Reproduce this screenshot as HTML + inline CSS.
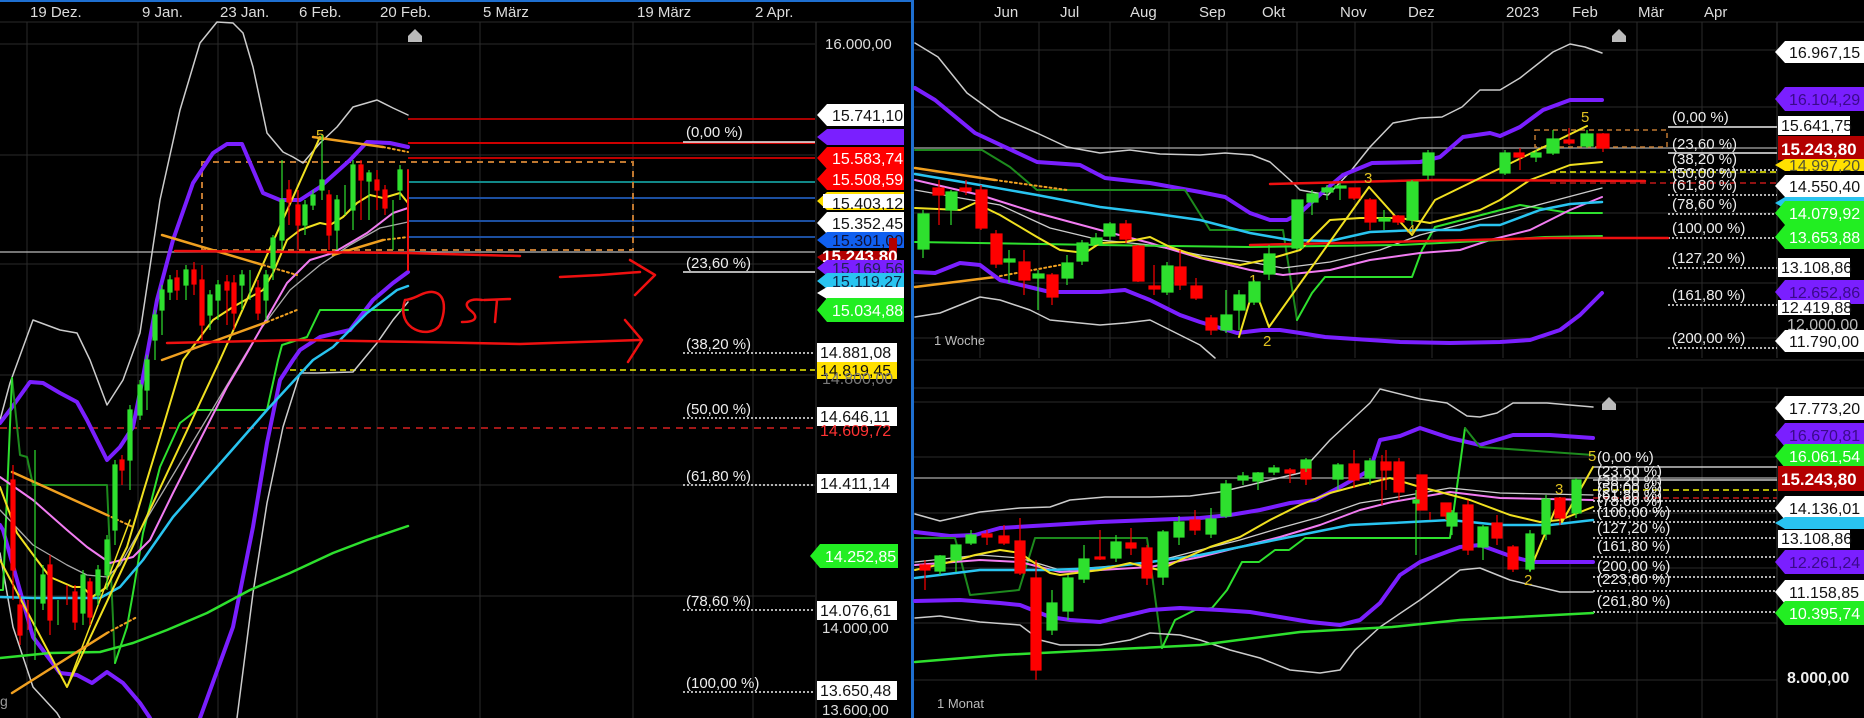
<!DOCTYPE html>
<html><head><meta charset="utf-8"><style>
html,body{margin:0;padding:0;background:#000;}
svg{display:block;}
text{font-family:"Liberation Sans",sans-serif;}
</style></head><body>
<svg width="1864" height="718" viewBox="0 0 1864 718" xmlns="http://www.w3.org/2000/svg">
<rect width="1864" height="718" fill="#000"/>
<!-- ============ LEFT PANEL ============ -->
<g stroke="#2a2a2a" stroke-width="1">
<line x1="27" y1="22" x2="27" y2="718"/><line x1="138" y1="22" x2="138" y2="718"/><line x1="218" y1="22" x2="218" y2="718"/><line x1="297" y1="22" x2="297" y2="718"/><line x1="377" y1="22" x2="377" y2="718"/><line x1="480" y1="22" x2="480" y2="718"/><line x1="633" y1="22" x2="633" y2="718"/><line x1="753" y1="22" x2="753" y2="718"/>
<line x1="0" y1="155" x2="815" y2="155"/><line x1="0" y1="264" x2="815" y2="264"/><line x1="0" y1="375" x2="815" y2="375"/><line x1="0" y1="485" x2="815" y2="485"/><line x1="0" y1="596" x2="815" y2="596"/><line x1="0" y1="44" x2="815" y2="44"/>
<line x1="0" y1="22" x2="912" y2="22"/>
</g>
<line x1="816" y1="22" x2="816" y2="718" stroke="#333"/>
<rect x="0" y="0" width="912" height="2" fill="#1e6fd0"/>
<rect x="911" y="0" width="3" height="718" fill="#1e6fd0"/>
<g fill="#ddd" font-size="15">
<text x="30" y="17">19 Dez.</text><text x="142" y="17">9 Jan.</text><text x="220" y="17">23 Jan.</text><text x="299" y="17">6 Feb.</text><text x="380" y="17">20 Feb.</text><text x="483" y="17">5 März</text><text x="637" y="17">19 März</text><text x="755" y="17">2 Apr.</text>
</g>
<path d="M408,36 l7,-7 l7,7 v6 h-14z" fill="#bbb"/>
<!-- horizontals -->
<line x1="0" y1="252" x2="815" y2="252" stroke="#bbb" stroke-width="1.3"/>
<line x1="408" y1="119" x2="815" y2="119" stroke="#a00" stroke-width="2"/>
<line x1="408" y1="143" x2="815" y2="143" stroke="#c00" stroke-width="2"/>
<line x1="408" y1="158" x2="815" y2="158" stroke="#b00" stroke-width="2"/>
<line x1="408" y1="182" x2="815" y2="182" stroke="#188" stroke-width="2"/>
<line x1="408" y1="198" x2="815" y2="198" stroke="#1c4fa0" stroke-width="2"/>
<line x1="408" y1="221" x2="815" y2="221" stroke="#1c4fa0" stroke-width="2"/>
<line x1="408" y1="237" x2="815" y2="237" stroke="#1c4fa0" stroke-width="2"/>
<rect x="202" y="162" width="431" height="88" fill="none" stroke="#c07830" stroke-width="2" stroke-dasharray="6,5"/>
<line x1="683" y1="142" x2="815" y2="142" stroke="#eee" stroke-width="1.5"/>
<line x1="683" y1="272" x2="815" y2="272" stroke="#eee" stroke-width="1.5"/>
<g stroke="#eee" stroke-width="1.5" stroke-dasharray="2,2">
<line x1="683" y1="353" x2="815" y2="353"/><line x1="683" y1="418" x2="815" y2="418"/><line x1="683" y1="485" x2="815" y2="485"/><line x1="683" y1="610" x2="815" y2="610"/><line x1="683" y1="692" x2="815" y2="692"/>
</g>
<line x1="290" y1="370" x2="815" y2="370" stroke="#ee0" stroke-width="1.5" stroke-dasharray="6,4"/>
<line x1="0" y1="428" x2="815" y2="428" stroke="#a01818" stroke-width="2" stroke-dasharray="7,6"/>
<g fill="#eee" font-size="15">
<text x="686" y="137">(0,00 %)</text><text x="686" y="268">(23,60 %)</text><text x="686" y="349">(38,20 %)</text><text x="686" y="414">(50,00 %)</text><text x="686" y="481">(61,80 %)</text><text x="686" y="606">(78,60 %)</text><text x="686" y="688">(100,00 %)</text>
</g>
<!-- curves left -->
<g fill="none" stroke-linejoin="round" stroke-linecap="round">
<polyline stroke="#ccc" stroke-width="1.5" points="0,420 10,383 33,320 60,330 77,333 90,360 107,405 123,380 140,333 160,200 180,110 200,43 217,22 233,23 243,33 253,67 267,133 283,152 293,157 303,163 320,143 337,127 353,107 377,100 393,108 408,115"/>
<polyline stroke="#ccc" stroke-width="1.5" points="0,553 13,627 33,687 57,713 60,718"/>
<polyline stroke="#ccc" stroke-width="1.5" points="237,718 253,593 267,503 283,427 300,373 317,373 353,372 377,343 393,320 408,302"/>
<polyline stroke="#7a1fff" stroke-width="4" points="0,423 10,410 30,382 43,383 60,393 77,402 87,420 107,460 120,447 133,427 143,377 157,300 173,240 193,183 213,153 227,144 242,144 263,193 280,200 300,200 320,187 350,160 367,142 390,143 408,147"/>
<polyline stroke="#7a1fff" stroke-width="4" points="0,525 3,530 33,637 60,673 77,675 92,683 107,672 123,683 140,703 150,718"/>
<polyline stroke="#7a1fff" stroke-width="4" points="200,718 233,627 253,527 267,443 280,380 293,360 300,350 320,337 350,330 373,300 393,283 408,272"/>
<polyline stroke="#1d8a1d" stroke-width="2" points="12,378 20,455 27,457 33,485 107,485 110,553 115,663"/>
<polyline stroke="#2ee02e" stroke-width="2" points="0,590 3,590 12,378"/>
<polyline stroke="#2ee02e" stroke-width="2" points="115,663 127,627 133,593 143,533 160,467 180,423 197,410 267,410 278,360 282,345 307,337 320,310 408,310"/>
<polyline stroke="#aaa" stroke-width="1.3" points="0,510 33,545 67,565 87,575 107,577 120,565 140,530 170,480 200,430 230,380 260,330 290,290 320,265 350,245 380,228 408,222"/>
<polyline stroke="#f27cf2" stroke-width="2" points="0,477 33,500 67,530 87,547 110,563 133,557 150,540 173,493 200,440 227,387 243,360 287,283 310,260 333,253 367,233 393,213 408,208"/>
<polyline stroke="#29c4f0" stroke-width="2.5" points="0,597 33,598 100,598 120,587 143,560 173,517 217,467 267,410 313,360 333,347 367,313 397,290 408,286"/>
<polyline stroke="#2ee02e" stroke-width="2.5" points="0,658 50,653 100,652 133,643 167,630 207,613 250,590 290,573 333,553 367,540 408,526"/>
<polyline stroke="#f0e020" stroke-width="2" points="0,487 17,533 37,560 50,577 73,587 83,587 92,597 107,587 127,547 143,493 160,437 183,360 213,320 233,307 263,290 273,273 287,240 300,230 320,223 330,225 343,217 357,203 370,195 383,198 400,193 408,203"/>
<polyline stroke="#f0e020" stroke-width="2" points="0,560 67,687 220,360 320,137"/>
<polyline stroke="#f0e020" stroke-width="1.5" points="67,687 100,600 130,520"/>
<line x1="162" y1="235" x2="263" y2="265" stroke="#f0a020" stroke-width="2.5"/>
<line x1="263" y1="265" x2="297" y2="275" stroke="#f0a020" stroke-width="2" stroke-dasharray="2,3"/>
<line x1="162" y1="360" x2="267" y2="322" stroke="#f0a020" stroke-width="2.5"/>
<line x1="267" y1="322" x2="297" y2="310" stroke="#f0a020" stroke-width="2" stroke-dasharray="2,3"/>
<line x1="313" y1="137" x2="383" y2="147" stroke="#f0a020" stroke-width="2.5"/>
<line x1="383" y1="147" x2="408" y2="152" stroke="#f0a020" stroke-width="2" stroke-dasharray="2,3"/>
<line x1="333" y1="255" x2="383" y2="240" stroke="#f0a020" stroke-width="2.5"/>
<line x1="383" y1="240" x2="408" y2="237" stroke="#f0a020" stroke-width="2" stroke-dasharray="2,3"/>
<line x1="12" y1="472" x2="107" y2="515" stroke="#f0a020" stroke-width="2.5"/>
<line x1="107" y1="515" x2="133" y2="527" stroke="#f0a020" stroke-width="2" stroke-dasharray="2,3"/>
<line x1="12" y1="693" x2="107" y2="633" stroke="#f0a020" stroke-width="2.5"/>
<line x1="107" y1="633" x2="137" y2="617" stroke="#f0a020" stroke-width="2" stroke-dasharray="2,3"/>
<!-- hand drawn red -->
<polyline stroke="#ee1010" stroke-width="2.5" points="175,251 300,252 408,253 520,256"/>
<polyline stroke="#ee1010" stroke-width="2.5" points="167,343 300,340 420,342 520,344 640,340"/>
<polyline stroke="#ee1010" stroke-width="2.5" points="560,277 600,275 640,272"/>
<polyline stroke="#ee1010" stroke-width="2.5" points="630,260 655,275 635,295"/>
<polyline stroke="#ee1010" stroke-width="2.5" points="625,320 642,340 628,362"/>
<path d="M405,300 C395,330 430,340 440,325 C450,300 440,285 420,295 C410,300 405,300 405,300" stroke="#ee1010" stroke-width="2.5"/>
<path d="M482,300 C470,298 462,303 470,310 C478,316 478,322 462,322 M484,300 L510,299 M497,300 L495,322" stroke="#ee1010" stroke-width="2.5"/>
<line x1="408" y1="170" x2="408" y2="270" stroke="#ee1010" stroke-width="2"/>
</g>
<text x="316" y="140" fill="#e0c020" font-size="15">5</text>
<!-- left candles -->
<g stroke-width="1.2">
<g stroke="#f00" fill="#f00"><line x1="13" y1="465" x2="13" y2="600"/><rect x="11" y="480" width="4" height="90"/><line x1="20" y1="595" x2="20" y2="645"/><rect x="18" y="605" width="4" height="30"/><line x1="28" y1="600" x2="28" y2="630"/><line x1="50" y1="555" x2="50" y2="635"/><rect x="48" y="565" width="4" height="55"/><line x1="67" y1="585" x2="67" y2="605"/><line x1="75" y1="585" x2="75" y2="630"/><rect x="73" y="592" width="4" height="30"/><line x1="90" y1="578" x2="90" y2="625"/><rect x="88" y="582" width="4" height="35"/><line x1="122" y1="455" x2="122" y2="485"/><rect x="120" y="460" width="4" height="10"/><line x1="177" y1="270" x2="177" y2="300"/><rect x="175" y="278" width="4" height="12"/><line x1="194" y1="262" x2="194" y2="295"/><rect x="192" y="270" width="4" height="14"/><line x1="202" y1="265" x2="202" y2="340"/><rect x="200" y="280" width="4" height="45"/><line x1="227" y1="275" x2="227" y2="325"/><rect x="225" y="282" width="4" height="8"/><line x1="234" y1="275" x2="234" y2="330"/><rect x="232" y="283" width="4" height="30"/><line x1="258" y1="280" x2="258" y2="320"/><rect x="256" y="288" width="4" height="25"/><line x1="289" y1="180" x2="289" y2="225"/><rect x="287" y="190" width="4" height="12"/><line x1="298" y1="190" x2="298" y2="250"/><rect x="296" y="205" width="4" height="20"/><line x1="329" y1="190" x2="329" y2="250"/><rect x="327" y="195" width="4" height="40"/><line x1="361" y1="160" x2="361" y2="220"/><rect x="359" y="165" width="4" height="15"/><line x1="377" y1="170" x2="377" y2="210"/><rect x="375" y="180" width="4" height="10"/><line x1="385" y1="185" x2="385" y2="215"/><rect x="383" y="190" width="4" height="18"/></g>
<g stroke="#2ee02e" fill="#2ee02e"><line x1="35" y1="450" x2="35" y2="660"/><line x1="43" y1="565" x2="43" y2="610"/><rect x="41" y="575" width="4" height="28"/><line x1="58" y1="600" x2="58" y2="625"/><line x1="83" y1="570" x2="83" y2="625"/><rect x="81" y="575" width="4" height="38"/><line x1="98" y1="565" x2="98" y2="605"/><rect x="96" y="570" width="4" height="25"/><line x1="107" y1="535" x2="107" y2="590"/><rect x="105" y="540" width="4" height="35"/><line x1="115" y1="460" x2="115" y2="545"/><rect x="113" y="465" width="4" height="65"/><line x1="130" y1="405" x2="130" y2="490"/><rect x="128" y="410" width="4" height="50"/><line x1="140" y1="380" x2="140" y2="420"/><rect x="138" y="385" width="4" height="30"/><line x1="147" y1="355" x2="147" y2="410"/><rect x="145" y="360" width="4" height="30"/><line x1="155" y1="310" x2="155" y2="360"/><rect x="153" y="315" width="4" height="25"/><line x1="162" y1="285" x2="162" y2="335"/><rect x="160" y="290" width="4" height="20"/><line x1="170" y1="275" x2="170" y2="300"/><rect x="168" y="280" width="4" height="12"/><line x1="186" y1="265" x2="186" y2="300"/><rect x="184" y="270" width="4" height="15"/><line x1="210" y1="290" x2="210" y2="330"/><rect x="208" y="295" width="4" height="20"/><line x1="218" y1="280" x2="218" y2="320"/><rect x="216" y="285" width="4" height="15"/><line x1="242" y1="270" x2="242" y2="310"/><rect x="240" y="275" width="4" height="10"/><line x1="250" y1="270" x2="250" y2="300"/><line x1="266" y1="270" x2="266" y2="320"/><rect x="264" y="275" width="4" height="25"/><line x1="273" y1="235" x2="273" y2="280"/><rect x="271" y="238" width="4" height="30"/><line x1="282" y1="160" x2="282" y2="250"/><rect x="280" y="200" width="4" height="40"/><line x1="305" y1="200" x2="305" y2="235"/><rect x="303" y="205" width="4" height="20"/><line x1="313" y1="190" x2="313" y2="210"/><rect x="311" y="195" width="4" height="10"/><line x1="322" y1="135" x2="322" y2="200"/><rect x="320" y="180" width="4" height="10"/><line x1="337" y1="195" x2="337" y2="250"/><rect x="335" y="200" width="4" height="30"/><line x1="345" y1="185" x2="345" y2="215"/><line x1="353" y1="160" x2="353" y2="230"/><rect x="351" y="165" width="4" height="45"/><line x1="369" y1="170" x2="369" y2="220"/><rect x="367" y="173" width="4" height="8"/><line x1="393" y1="200" x2="393" y2="250"/><line x1="400" y1="165" x2="400" y2="200"/><rect x="398" y="170" width="4" height="20"/></g>
</g>
<text x="0" y="706" fill="#999" font-size="14">g</text>
<!-- left axis -->
<g font-size="15" fill="#ddd"><text x="825" y="49">16.000,00</text><text x="822" y="633">14.000,00</text><text x="822" y="715">13.600,00</text></g>
<g font-size="16">
<path d="M817,115 l10,-11 h77 v22 h-77z" fill="#fff"/><text x="832" y="121" fill="#111">15.741,10</text>
<path d="M817,137 l10,-8 h77 v16 h-77z" fill="#7a1fff"/>
<path d="M817,158 l10,-11 h77 v22 h-77z" fill="#f00"/><text x="832" y="164" fill="#fff">15.583,74</text>
<path d="M817,179 l10,-11 h77 v22 h-77z" fill="#f00"/><text x="832" y="185" fill="#fff">15.508,59</text>
<path d="M817,201 l10,-9 h77 v18 h-77z" fill="#ffe000"/><rect x="823" y="194" width="81" height="14" fill="#fff"/><text x="832" y="209" fill="#111">15.403,12</text>
<path d="M817,223 l10,-11 h77 v22 h-77z" fill="#fff"/><text x="832" y="229" fill="#111">15.352,45</text>
<path d="M817,240 l10,-8 h77 v16 h-77z" fill="#1060f0"/><text x="832" y="246" fill="#113">15.301,00</text>
<path d="M817,257 l10,-6 h62 v-13 h8 v30 h-8 v-3 h-62z" fill="#b30000"/><text x="822" y="262" fill="#fff" font-weight="bold" font-size="17">15.243,80</text>
<path d="M817,268 l10,-8 h77 v16 h-77z" fill="#7a1fff"/><text x="832" y="274" fill="#225">15.169,56</text>
<path d="M817,281 l10,-8 h77 v16 h-77z" fill="#29c4f0"/><text x="832" y="287" fill="#124">15.119,27</text>
<path d="M817,293 l10,-6 h77 v12 h-77z" fill="#fff"/>
<path d="M817,310 l10,-12 h77 v24 h-77z" fill="#22ee22"/><text x="832" y="316" fill="#fff">15.034,88</text>
<rect x="817" y="343" width="80" height="19" fill="#fff"/><text x="820" y="358" fill="#111">14.881,08</text>
<rect x="817" y="362" width="80" height="17" fill="#ffe000"/><text x="820" y="376" fill="#111">14.819,45</text>
<text x="822" y="384" fill="#777">14.800,00</text>
<rect x="817" y="407" width="80" height="19" fill="#fff"/><text x="820" y="422" fill="#111">14.646,11</text>
<text x="820" y="436" fill="#f33">14.609,72</text>
<rect x="817" y="474" width="80" height="19" fill="#fff"/><text x="820" y="489" fill="#111">14.411,14</text>
<path d="M810,556 l10,-12 h78 v24 h-78z" fill="#22ee22"/><text x="825" y="562" fill="#fff">14.252,85</text>
<rect x="817" y="601" width="80" height="19" fill="#fff"/><text x="820" y="616" fill="#111">14.076,61</text>
<rect x="817" y="681" width="80" height="19" fill="#fff"/><text x="820" y="696" fill="#111">13.650,48</text>
</g>

<!-- ============ RIGHT TOP PANEL ============ -->
<g stroke="#2a2a2a" stroke-width="1">
<line x1="980" y1="22" x2="980" y2="358"/><line x1="1039" y1="22" x2="1039" y2="358"/><line x1="1110" y1="22" x2="1110" y2="358"/><line x1="1169" y1="22" x2="1169" y2="358"/><line x1="1227" y1="22" x2="1227" y2="358"/><line x1="1297" y1="22" x2="1297" y2="358"/><line x1="1355" y1="22" x2="1355" y2="358"/><line x1="1432" y1="22" x2="1432" y2="358"/><line x1="1503" y1="22" x2="1503" y2="358"/><line x1="1570" y1="22" x2="1570" y2="358"/><line x1="1637" y1="22" x2="1637" y2="358"/><line x1="1702" y1="22" x2="1702" y2="358"/>
<line x1="914" y1="22" x2="1864" y2="22"/>
<line x1="914" y1="50" x2="1777" y2="50"/><line x1="914" y1="107" x2="1777" y2="107"/><line x1="914" y1="173" x2="1777" y2="173"/><line x1="914" y1="213" x2="1777" y2="213"/><line x1="914" y1="283" x2="1777" y2="283"/><line x1="914" y1="338" x2="1777" y2="338"/>
</g>
<line x1="1777" y1="22" x2="1777" y2="358" stroke="#333"/>
<g fill="#ddd" font-size="15">
<text x="994" y="17">Jun</text><text x="1060" y="17">Jul</text><text x="1130" y="17">Aug</text><text x="1199" y="17">Sep</text><text x="1262" y="17">Okt</text><text x="1340" y="17">Nov</text><text x="1408" y="17">Dez</text><text x="1506" y="17">2023</text><text x="1572" y="17">Feb</text><text x="1638" y="17">Mär</text><text x="1704" y="17">Apr</text>
</g>
<path d="M1612,36 l7,-7 l7,7 v6 h-14z" fill="#bbb"/>
<line x1="914" y1="148" x2="1777" y2="148" stroke="#aaa" stroke-width="1.3"/>
<line x1="1668" y1="127" x2="1777" y2="127" stroke="#eee" stroke-width="1.5"/>
<line x1="1668" y1="153" x2="1777" y2="153" stroke="#eee" stroke-width="1.5"/>
<g stroke="#eee" stroke-width="1.5" stroke-dasharray="2,2">
<line x1="1668" y1="170" x2="1777" y2="170"/><line x1="1668" y1="195" x2="1777" y2="195"/><line x1="1668" y1="214" x2="1777" y2="214"/><line x1="1668" y1="238" x2="1777" y2="238"/><line x1="1668" y1="268" x2="1777" y2="268"/><line x1="1668" y1="305" x2="1777" y2="305"/><line x1="1668" y1="348" x2="1777" y2="348"/>
</g>
<line x1="1550" y1="172" x2="1777" y2="172" stroke="#ee0" stroke-width="1.5" stroke-dasharray="6,4"/>
<line x1="1550" y1="183" x2="1777" y2="183" stroke="#c01818" stroke-width="1.5" stroke-dasharray="6,4"/>
<rect x="1535" y="130" width="132" height="17" fill="none" stroke="#c07830" stroke-width="1.5" stroke-dasharray="5,4"/>
<g fill="none" stroke-linejoin="round" stroke-linecap="round">
<polyline stroke="#ccc" stroke-width="1.5" points="915,43 938,57 967,93 1000,117 1037,133 1067,147 1100,153 1130,150 1160,154 1200,155 1225,153 1252,155 1270,162 1290,180 1300,190 1328,195 1350,172 1370,147 1393,123 1420,118 1442,117 1462,107 1480,90 1500,90 1520,78 1553,52 1570,44 1585,47 1602,53"/>
<polyline stroke="#7a1fff" stroke-width="4" points="915,88 935,100 975,133 1037,162 1080,165 1105,178 1150,183 1200,192 1225,197 1250,213 1270,220 1287,220 1300,213 1325,190 1343,175 1372,163 1420,162 1440,157 1463,137 1490,133 1500,136 1520,127 1543,110 1570,100 1602,100"/>
<polyline stroke="#1d8a1d" stroke-width="2" points="915,150 982,150 1010,167 1037,190 1185,190 1210,230 1283,230 1297,320"/>
<polyline stroke="#2ee02e" stroke-width="2" points="1297,320 1312,293 1325,277 1412,277 1422,250 1435,227 1520,205 1570,213 1602,213"/>
<polyline stroke="#ccc" stroke-width="1.3" points="915,190 1000,205 1050,228 1100,240 1150,245 1200,255 1250,262 1283,268 1330,262 1380,250 1420,235 1490,217 1530,207 1602,188"/>
<polyline stroke="#f27cf2" stroke-width="2" points="915,180 980,195 1037,213 1100,230 1150,243 1200,258 1250,270 1283,275 1330,270 1370,260 1420,253 1460,250 1490,240 1530,230 1570,210 1602,197"/>
<polyline stroke="#29c4f0" stroke-width="2.5" points="915,174 980,185 1037,195 1100,207 1150,213 1200,220 1250,233 1290,240 1330,241 1370,232 1420,230 1460,230 1480,225 1500,225 1540,210 1570,204 1602,202"/>
<polyline stroke="#2ee02e" stroke-width="2" points="915,242 1100,245 1250,247 1400,245 1500,240 1545,237 1602,236"/>
<polyline stroke="#f0e020" stroke-width="2" points="915,208 960,210 975,203 1000,215 1037,237 1060,250 1085,253 1100,243 1125,242 1150,237 1170,247 1203,258 1240,265 1265,260 1283,255 1300,250 1330,220 1360,218 1400,218 1430,223 1480,210 1500,200 1530,180 1570,165 1602,162"/>
<polyline stroke="#ee1010" stroke-width="2.5" points="1270,184 1435,180 1645,181"/>
<polyline stroke="#ee1010" stroke-width="2.5" points="1250,245 1430,241 1550,238 1668,238"/>
<line x1="915" y1="168" x2="995" y2="180" stroke="#f0a020" stroke-width="2.5"/>
<line x1="995" y1="180" x2="1067" y2="190" stroke="#f0a020" stroke-width="2" stroke-dasharray="2,3"/>
<line x1="915" y1="287" x2="995" y2="277" stroke="#f0a020" stroke-width="2.5"/>
<line x1="995" y1="277" x2="1060" y2="265" stroke="#f0a020" stroke-width="2" stroke-dasharray="2,3"/>
<polyline stroke="#7a1fff" stroke-width="4" points="915,272 935,273 960,263 980,265 1000,280 1050,292 1100,292 1125,290 1150,300 1180,315 1200,322 1237,333 1262,330 1280,330 1300,333 1325,337 1400,342 1450,343 1500,342 1530,340 1560,330 1580,315 1602,293"/>
<polyline stroke="#ccc" stroke-width="1.5" points="915,317 940,313 980,297 1000,300 1030,310 1050,320 1100,325 1125,323 1150,320 1180,335 1200,345 1215,358"/>
<polyline stroke="#f0e020" stroke-width="2" points="1239,337 1254,287 1269,327 1369,187 1412,235 1435,200 1587,126"/>
</g>
<g fill="#e0c020" font-size="15"><text x="1249" y="285">1</text><text x="1263" y="346">2</text><text x="1364" y="183">3</text><text x="1407" y="235">4</text><text x="1581" y="122">5</text></g>
<!-- top right candles -->
<g stroke-width="1.2">
<g stroke="#f00" fill="#f00"><line x1="939" y1="180" x2="939" y2="225"/><rect x="933" y="188" width="11" height="7"/><line x1="966" y1="180" x2="966" y2="195"/><rect x="960" y="188" width="11" height="3"/><line x1="981" y1="185" x2="981" y2="230"/><rect x="976" y="190" width="11" height="38"/><line x1="996" y1="230" x2="996" y2="268"/><rect x="991" y="234" width="11" height="30"/><line x1="1024" y1="250" x2="1024" y2="295"/><rect x="1019" y="262" width="11" height="18"/><line x1="1052" y1="273" x2="1052" y2="305"/><rect x="1047" y="275" width="11" height="22"/><line x1="1126" y1="220" x2="1126" y2="243"/><rect x="1120" y="224" width="11" height="15"/><line x1="1138" y1="245" x2="1138" y2="282"/><rect x="1133" y="246" width="11" height="35"/><line x1="1154" y1="265" x2="1154" y2="295"/><rect x="1149" y="286" width="11" height="3"/><line x1="1180" y1="250" x2="1180" y2="290"/><rect x="1175" y="267" width="11" height="18"/><line x1="1196" y1="278" x2="1196" y2="300"/><rect x="1191" y="286" width="11" height="12"/><line x1="1211" y1="315" x2="1211" y2="335"/><rect x="1206" y="318" width="11" height="12"/><line x1="1354" y1="188" x2="1354" y2="200"/><rect x="1349" y="188" width="11" height="10"/><line x1="1370" y1="198" x2="1370" y2="230"/><rect x="1365" y="200" width="11" height="22"/><line x1="1398" y1="215" x2="1398" y2="225"/><rect x="1393" y="216" width="11" height="6"/><line x1="1520" y1="148" x2="1520" y2="170"/><rect x="1514" y="153" width="10" height="4"/><line x1="1569" y1="128" x2="1569" y2="145"/><rect x="1564" y="140" width="10" height="3"/><line x1="1603" y1="133" x2="1603" y2="152"/><rect x="1597" y="134" width="12" height="14"/></g>
<g stroke="#2ee02e" fill="#2ee02e"><line x1="923" y1="210" x2="923" y2="258"/><rect x="918" y="214" width="11" height="35"/><line x1="951" y1="190" x2="951" y2="225"/><rect x="946" y="192" width="11" height="18"/><line x1="1009" y1="250" x2="1009" y2="283"/><rect x="1004" y="259" width="11" height="3"/><line x1="1038" y1="270" x2="1038" y2="310"/><rect x="1033" y="274" width="11" height="4"/><line x1="1067" y1="255" x2="1067" y2="285"/><rect x="1062" y="263" width="11" height="15"/><line x1="1082" y1="240" x2="1082" y2="265"/><rect x="1077" y="243" width="11" height="18"/><line x1="1096" y1="233" x2="1096" y2="245"/><rect x="1091" y="238" width="11" height="6"/><line x1="1110" y1="222" x2="1110" y2="240"/><rect x="1104" y="224" width="11" height="12"/><line x1="1167" y1="262" x2="1167" y2="295"/><rect x="1162" y="266" width="11" height="26"/><line x1="1226" y1="290" x2="1226" y2="333"/><rect x="1221" y="315" width="11" height="15"/><line x1="1239" y1="290" x2="1239" y2="330"/><rect x="1234" y="295" width="11" height="15"/><line x1="1254" y1="280" x2="1254" y2="305"/><rect x="1249" y="282" width="11" height="20"/><line x1="1269" y1="245" x2="1269" y2="280"/><rect x="1264" y="254" width="11" height="20"/><line x1="1297" y1="200" x2="1297" y2="250"/><rect x="1292" y="200" width="11" height="48"/><line x1="1312" y1="190" x2="1312" y2="215"/><rect x="1307" y="194" width="11" height="8"/><line x1="1327" y1="185" x2="1327" y2="200"/><rect x="1322" y="188" width="11" height="4"/><line x1="1340" y1="183" x2="1340" y2="200"/><rect x="1335" y="186" width="11" height="2"/><line x1="1384" y1="210" x2="1384" y2="230"/><rect x="1379" y="218" width="11" height="3"/><line x1="1412" y1="180" x2="1412" y2="225"/><rect x="1407" y="182" width="11" height="38"/><line x1="1428" y1="150" x2="1428" y2="180"/><rect x="1423" y="153" width="11" height="22"/><line x1="1505" y1="150" x2="1505" y2="175"/><rect x="1500" y="153" width="10" height="20"/><line x1="1536" y1="150" x2="1536" y2="162"/><rect x="1531" y="153" width="10" height="4"/><line x1="1553" y1="130" x2="1553" y2="155"/><rect x="1547" y="139" width="12" height="14"/><line x1="1587" y1="130" x2="1587" y2="148"/><rect x="1581" y="134" width="12" height="12"/></g>
</g>
<text x="934" y="345" fill="#bbb" font-size="13">1 Woche</text>
<g fill="#eee" font-size="15">
<text x="1672" y="122">(0,00 %)</text><text x="1672" y="149">(23,60 %)</text><text x="1672" y="164">(38,20 %)</text><text x="1672" y="178">(50,00 %)</text><text x="1672" y="190">(61,80 %)</text><text x="1672" y="209">(78,60 %)</text><text x="1672" y="233">(100,00 %)</text><text x="1672" y="263">(127,20 %)</text><text x="1672" y="300">(161,80 %)</text><text x="1672" y="343">(200,00 %)</text>
</g>
<g font-size="16">
<path d="M1775,52 l10,-11 h79 v22 h-79z" fill="#fff"/><text x="1789" y="58" fill="#111">16.967,15</text>
<path d="M1775,99 l10,-12 h79 v24 h-79z" fill="#7a1fff"/><text x="1789" y="105" fill="#3a0a8a">16.104,29</text>
<rect x="1778" y="116" width="72" height="19" fill="#fff"/><text x="1781" y="131" fill="#111">15.641,75</text>
<rect x="1778" y="136" width="86" height="24" fill="#b30000"/><text x="1781" y="155" fill="#fff" font-weight="bold" font-size="17">15.243,80</text>
<path d="M1775,165 l10,-6 h79 v12 h-79z" fill="#ffe000"/><text x="1789" y="171" fill="#553">14.997,20</text>
<path d="M1775,186 l10,-11 h79 v22 h-79z" fill="#fff"/><text x="1789" y="192" fill="#111">14.550,40</text>
<path d="M1775,203 l10,-6 h79 v12 h-79z" fill="#29c4f0"/>
<path d="M1775,213 l10,-12 h79 v24 h-79z" fill="#22ee22"/><text x="1789" y="219" fill="#fff">14.079,92</text>
<path d="M1775,237 l10,-12 h79 v24 h-79z" fill="#22ee22"/><text x="1789" y="243" fill="#fff">13.653,88</text>
<rect x="1778" y="258" width="72" height="19" fill="#fff"/><text x="1781" y="273" fill="#111">13.108,86</text>
<path d="M1775,292 l10,-12 h79 v24 h-79z" fill="#7a1fff"/><text x="1789" y="298" fill="#3a0a8a">12.652,86</text>
<rect x="1778" y="300" width="72" height="15" fill="#fff"/><text x="1781" y="313" fill="#111">12.419,88</text>
<text x="1787" y="330" fill="#bbb">12.000,00</text>
<path d="M1775,341 l10,-11 h79 v22 h-79z" fill="#fff"/><text x="1789" y="347" fill="#111">11.790,00</text>
</g>

<!-- ============ RIGHT BOTTOM PANEL ============ -->
<g stroke="#2a2a2a" stroke-width="1">
<line x1="914" y1="360" x2="1864" y2="360"/><line x1="914" y1="388" x2="1864" y2="388"/>
<line x1="914" y1="402" x2="1777" y2="402"/><line x1="914" y1="457" x2="1777" y2="457"/><line x1="914" y1="513" x2="1777" y2="513"/><line x1="914" y1="568" x2="1777" y2="568"/><line x1="914" y1="623" x2="1777" y2="623"/><line x1="914" y1="680" x2="1777" y2="680"/>
<line x1="1420" y1="388" x2="1420" y2="718"/><line x1="1503" y1="388" x2="1503" y2="718"/><line x1="1570" y1="388" x2="1570" y2="718"/><line x1="1637" y1="388" x2="1637" y2="718"/><line x1="1702" y1="388" x2="1702" y2="718"/>
</g>
<line x1="1777" y1="388" x2="1777" y2="718" stroke="#333"/>
<path d="M1602,404 l7,-7 l7,7 v6 h-14z" fill="#bbb"/>
<line x1="914" y1="478" x2="1777" y2="478" stroke="#aaa" stroke-width="1.3"/>
<line x1="1593" y1="467" x2="1777" y2="467" stroke="#eee" stroke-width="1.3"/>
<line x1="1593" y1="480" x2="1777" y2="480" stroke="#eee" stroke-width="1.3"/>
<line x1="1593" y1="490" x2="1777" y2="490" stroke="#ee0" stroke-width="1.5" stroke-dasharray="6,4"/>
<line x1="1593" y1="498" x2="1777" y2="498" stroke="#c01818" stroke-width="1.5" stroke-dasharray="6,4"/>
<g stroke="#eee" stroke-width="1.5" stroke-dasharray="2,2">
<line x1="1593" y1="501" x2="1777" y2="501"/><line x1="1593" y1="511" x2="1777" y2="511"/><line x1="1593" y1="522" x2="1777" y2="522"/><line x1="1593" y1="538" x2="1777" y2="538"/><line x1="1593" y1="557" x2="1777" y2="557"/><line x1="1593" y1="577" x2="1777" y2="577"/><line x1="1593" y1="591" x2="1777" y2="591"/><line x1="1593" y1="612" x2="1777" y2="612"/>
</g>
<g fill="none" stroke-linejoin="round" stroke-linecap="round">
<polyline stroke="#ccc" stroke-width="1.5" points="915,514 940,521 980,512 1020,508 1050,507 1070,500 1105,497 1150,497 1190,496 1220,492 1250,485 1270,480 1300,473 1330,440 1370,403 1380,389 1420,399 1447,403 1467,416 1480,417 1497,413 1513,403 1547,403 1593,407"/>
<polyline stroke="#7a1fff" stroke-width="4" points="915,532 950,536 975,535 1000,528 1050,525 1100,522 1150,520 1200,518 1230,515 1260,510 1290,503 1315,500 1340,487 1370,470 1380,440 1400,436 1420,428 1450,438 1480,445 1513,435 1550,435 1593,438"/>
<polyline stroke="#1d8a1d" stroke-width="2" points="915,538 955,538 970,595 1019,590 1035,538 1147,538 1162,648"/>
<polyline stroke="#2ee02e" stroke-width="2" points="1162,648 1175,620 1195,610 1212,608 1227,590 1242,562 1259,562 1275,550 1289,550 1305,538 1450,538 1465,428"/>
<polyline stroke="#1d8a1d" stroke-width="2" points="1465,428 1480,447 1593,455"/>
<polyline stroke="#ccc" stroke-width="1.3" points="915,562 980,555 1020,558 1060,570 1100,567 1150,563 1200,550 1240,540 1280,528 1320,517 1360,503 1392,498 1450,488 1500,493 1593,495"/>
<polyline stroke="#f27cf2" stroke-width="2" points="915,565 980,560 1020,562 1060,572 1100,570 1150,567 1200,557 1240,547 1280,537 1320,525 1360,510 1392,502 1450,492 1500,498 1593,500"/>
<polyline stroke="#29c4f0" stroke-width="2.5" points="915,578 980,570 1050,570 1100,568 1150,562 1200,555 1250,545 1300,535 1350,525 1392,523 1450,520 1500,525 1550,525 1593,520"/>
<polyline stroke="#f0e020" stroke-width="2" points="915,570 950,562 975,555 1000,550 1020,553 1030,560 1050,573 1060,575 1100,570 1130,563 1150,568 1160,570 1180,560 1210,547 1240,537 1270,520 1300,505 1330,493 1360,485 1390,478 1420,487 1440,492 1470,500 1510,515 1540,522 1560,520 1593,507"/>
<polyline stroke="#7a1fff" stroke-width="4" points="915,601 960,600 1000,603 1020,605 1050,617 1070,620 1100,622 1120,617 1150,610 1180,608 1220,610 1250,612 1280,617 1310,622 1340,625 1360,620 1380,603 1400,575 1420,562 1460,547 1480,545 1513,557 1533,562 1593,562"/>
<polyline stroke="#ccc" stroke-width="1.5" points="915,618 940,616 980,622 1020,625 1040,640 1060,645 1100,645 1130,640 1150,633 1180,635 1200,640 1230,650 1260,658 1290,670 1320,673 1340,670 1355,650 1380,627 1420,600 1460,570 1480,568 1510,580 1560,592 1593,592"/>
<polyline stroke="#2ee02e" stroke-width="2.5" points="915,662 1000,655 1100,650 1200,645 1300,632 1392,627 1460,620 1593,613"/>
<polyline stroke="#f0e020" stroke-width="2" points="1530,570 1560,498 1562,522 1593,467"/>
</g>
<g fill="#e0c020" font-size="15"><text x="1524" y="585">2</text><text x="1555" y="494">3</text><text x="1588" y="461">5</text></g>
<!-- bottom candles -->
<g stroke-width="1.2">
<g stroke="#f00" fill="#f00"><line x1="925" y1="560" x2="925" y2="590"/><rect x="920" y="565" width="10" height="5"/><line x1="987" y1="530" x2="987" y2="545"/><rect x="982" y="534" width="10" height="3"/><line x1="1004" y1="525" x2="1004" y2="545"/><rect x="999" y="536" width="10" height="7"/><line x1="1020" y1="518" x2="1020" y2="575"/><rect x="1015" y="541" width="10" height="32"/><line x1="1036" y1="560" x2="1036" y2="680"/><rect x="1031" y="578" width="10" height="92"/><line x1="1100" y1="530" x2="1100" y2="560"/><rect x="1095" y="557" width="10" height="2"/><line x1="1131" y1="528" x2="1131" y2="555"/><rect x="1126" y="543" width="10" height="5"/><line x1="1147" y1="545" x2="1147" y2="585"/><rect x="1142" y="548" width="10" height="30"/><line x1="1195" y1="510" x2="1195" y2="535"/><rect x="1190" y="520" width="10" height="10"/><line x1="1290" y1="468" x2="1290" y2="483"/><rect x="1285" y="470" width="10" height="3"/><line x1="1306" y1="460" x2="1306" y2="485"/><rect x="1301" y="462" width="10" height="17"/><line x1="1354" y1="450" x2="1354" y2="488"/><rect x="1349" y="464" width="10" height="16"/><line x1="1386" y1="450" x2="1386" y2="490"/><rect x="1381" y="462" width="10" height="8"/><line x1="1382" y1="455" x2="1382" y2="505"/><line x1="1399" y1="458" x2="1399" y2="500"/><rect x="1394" y="462" width="10" height="30"/><line x1="1422" y1="480" x2="1422" y2="510"/><rect x="1417" y="475" width="10" height="35"/><line x1="1430" y1="512" x2="1430" y2="520"/><line x1="1446" y1="510" x2="1446" y2="520"/><rect x="1441" y="503" width="10" height="13"/><line x1="1468" y1="500" x2="1468" y2="555"/><rect x="1463" y="505" width="10" height="45"/><line x1="1497" y1="515" x2="1497" y2="545"/><rect x="1492" y="523" width="10" height="15"/><line x1="1513" y1="545" x2="1513" y2="572"/><rect x="1508" y="547" width="10" height="22"/><line x1="1560" y1="498" x2="1560" y2="525"/><rect x="1555" y="498" width="10" height="20"/></g>
<g stroke="#2ee02e" fill="#2ee02e"><line x1="940" y1="555" x2="940" y2="575"/><rect x="935" y="556" width="10" height="15"/><line x1="956" y1="545" x2="956" y2="572"/><rect x="951" y="545" width="10" height="15"/><line x1="971" y1="530" x2="971" y2="545"/><rect x="966" y="535" width="10" height="8"/><line x1="1052" y1="590" x2="1052" y2="635"/><rect x="1047" y="603" width="10" height="27"/><line x1="1068" y1="575" x2="1068" y2="620"/><rect x="1063" y="578" width="10" height="33"/><line x1="1084" y1="545" x2="1084" y2="583"/><rect x="1079" y="559" width="10" height="20"/><line x1="1116" y1="535" x2="1116" y2="562"/><rect x="1111" y="542" width="10" height="16"/><line x1="1163" y1="530" x2="1163" y2="585"/><rect x="1158" y="532" width="10" height="45"/><line x1="1179" y1="516" x2="1179" y2="545"/><rect x="1174" y="522" width="10" height="15"/><line x1="1211" y1="508" x2="1211" y2="538"/><rect x="1206" y="519" width="10" height="15"/><line x1="1226" y1="480" x2="1226" y2="518"/><rect x="1221" y="484" width="10" height="32"/><line x1="1243" y1="472" x2="1243" y2="485"/><rect x="1238" y="476" width="10" height="4"/><line x1="1258" y1="472" x2="1258" y2="490"/><rect x="1253" y="473" width="10" height="8"/><line x1="1274" y1="465" x2="1274" y2="475"/><rect x="1269" y="468" width="10" height="4"/><line x1="1306" y1="458" x2="1306" y2="472"/><rect x="1301" y="460" width="10" height="8"/><line x1="1338" y1="463" x2="1338" y2="490"/><rect x="1333" y="465" width="10" height="14"/><line x1="1370" y1="458" x2="1370" y2="485"/><rect x="1365" y="461" width="10" height="17"/><line x1="1416" y1="490" x2="1416" y2="555"/><rect x="1413" y="500" width="6" height="3"/><line x1="1452" y1="510" x2="1452" y2="535"/><rect x="1447" y="513" width="10" height="13"/><line x1="1483" y1="525" x2="1483" y2="560"/><rect x="1478" y="527" width="10" height="20"/><line x1="1530" y1="530" x2="1530" y2="572"/><rect x="1526" y="534" width="8" height="35"/><line x1="1546" y1="495" x2="1546" y2="540"/><rect x="1542" y="499" width="8" height="35"/><line x1="1576" y1="478" x2="1576" y2="518"/><rect x="1572" y="480" width="9" height="33"/></g>
</g>
<text x="937" y="708" fill="#bbb" font-size="13">1 Monat</text>
<g fill="#eee" font-size="15">
<text x="1597" y="462">(0,00 %)</text><text x="1597" y="476">(23,60 %)</text><text x="1597" y="486">(38,20 %)</text><text x="1597" y="493">(50,00 %)</text><text x="1597" y="500">(61,80 %)</text><text x="1597" y="506">(78,60 %)</text><text x="1597" y="517">(100,00 %)</text><text x="1597" y="533">(127,20 %)</text><text x="1597" y="551">(161,80 %)</text><text x="1597" y="571">(200,00 %)</text><text x="1597" y="584">(223,60 %)</text><text x="1597" y="606">(261,80 %)</text>
</g>
<g font-size="16">
<path d="M1775,408 l10,-12 h79 v24 h-79z" fill="#fff"/><text x="1789" y="414" fill="#111">17.773,20</text>
<path d="M1775,435 l10,-12 h79 v24 h-79z" fill="#7a1fff"/><text x="1789" y="441" fill="#3a0a8a">16.670,81</text>
<path d="M1775,456 l10,-12 h79 v24 h-79z" fill="#22ee22"/><text x="1789" y="462" fill="#fff">16.061,54</text>
<rect x="1778" y="466" width="86" height="25" fill="#b30000"/><text x="1781" y="485" fill="#fff" font-weight="bold" font-size="17">15.243,80</text>
<path d="M1775,508 l10,-12 h79 v24 h-79z" fill="#fff"/><text x="1789" y="514" fill="#111">14.136,01</text>
<path d="M1775,523 l10,-6 h79 v12 h-79z" fill="#29c4f0"/>
<rect x="1778" y="530" width="72" height="18" fill="#fff"/><text x="1781" y="544" fill="#111">13.108,86</text>
<path d="M1775,562 l10,-12 h79 v24 h-79z" fill="#7a1fff"/><text x="1789" y="568" fill="#3a0a8a">12.261,24</text>
<path d="M1775,592 l10,-12 h79 v24 h-79z" fill="#fff"/><text x="1789" y="598" fill="#111">11.158,85</text>
<path d="M1775,613 l10,-12 h79 v24 h-79z" fill="#22ee22"/><text x="1789" y="619" fill="#fff">10.395,74</text>
<text x="1787" y="683" fill="#eee" font-weight="bold">8.000,00</text>
</g>
</svg>
</body></html>
